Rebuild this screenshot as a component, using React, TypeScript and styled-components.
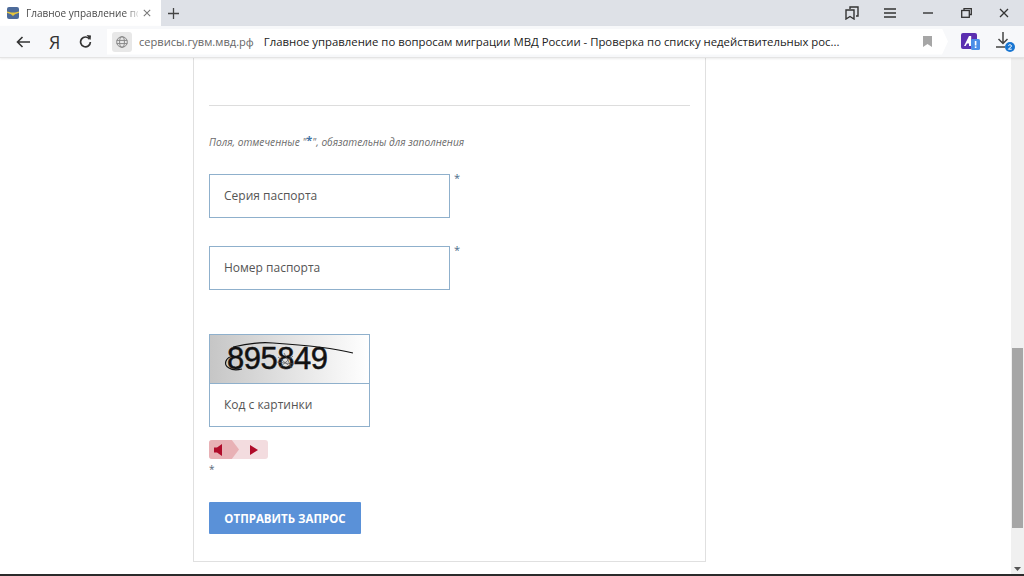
import React from "react";
import styled, { createGlobalStyle } from "styled-components";

const GlobalStyle = createGlobalStyle`
  html, body {
    margin: 0;
    padding: 0;
    height: 100%;
    overflow: hidden;
    background: #ffffff;
  }
  * {
    box-sizing: border-box;
  }
`;

const Screen = styled.div`
  display: flex;
  flex-direction: column;
  width: 1024px;
  height: 576px;
  overflow: hidden;
  font-family: "Open Sans", "Noto Sans", sans-serif;
`;

const TabBar = styled.div`
  display: flex;
  align-items: stretch;
  height: 26px;
  background: #dee1e7;
`;

const Tab = styled.div`
  display: flex;
  align-items: center;
  width: 161px;
  padding-left: 7px;
  background: #ffffff;
  font-size: 10px;
  color: #4a4a4a;
`;

const TabTitle = styled.span`
  width: 112px;
  margin-left: 7px;
  white-space: nowrap;
  -webkit-mask-image: linear-gradient(to right, #000 88%, rgba(0, 0, 0, 0.2));
  mask-image: linear-gradient(to right, #000 88%, rgba(0, 0, 0, 0.2));
`;

const TabClose = styled.span`
  display: flex;
  margin-left: 5px;
  color: #777;
`;

const NewTab = styled.div`
  display: flex;
  align-items: center;
  margin-left: 7px;
  color: #444;
`;

const WindowControls = styled.div`
  display: flex;
  align-items: center;
  margin-left: auto;
  padding-right: 1px;
  color: #333;
`;

const WindowButton = styled.span`
  display: flex;
  align-items: center;
  justify-content: center;
  width: 38px;
`;

const Toolbar = styled.div`
  display: flex;
  align-items: center;
  height: 32px;
  background: #f7f8fa;
  border-bottom: 1px solid #e4e4e4;
  box-shadow: 0 1px 2px rgba(0, 0, 0, 0.08);
  position: relative;
  z-index: 1;
`;

const NavIcons = styled.div`
  display: flex;
  align-items: center;
  width: 107px;
  padding-left: 16px;
  gap: 19px;
  color: #333;
`;

const YaMark = styled.span`
  font-size: 18px;
  line-height: 1;
  color: #333;
`;

const AddressBar = styled.div`
  display: flex;
  align-items: center;
  width: 841px;
  height: 26px;
  padding: 0 16px 0 5px;
  background: #ffffff;
  clip-path: polygon(0 0, calc(100% - 6px) 0, 100% 50%, calc(100% - 6px) 100%, 0 100%);
  white-space: nowrap;
`;

const GlobeBox = styled.span`
  display: flex;
  align-items: center;
  justify-content: center;
  width: 20px;
  height: 20px;
  border-radius: 3px;
  background: #e8e8e8;
  color: #888;
`;

const Domain = styled.span`
  margin-left: 7px;
  font-size: 11.1px;
  color: #666;
`;

const PageTitle = styled.span`
  margin-left: 10px;
  font-size: 11.35px;
  color: #222;
`;

const Bookmark = styled.span`
  display: flex;
  margin-left: auto;
  color: #a6a6a6;
`;

const ToolbarExtras = styled.div`
  display: flex;
  align-items: center;
  gap: 15px;
  margin-left: 13px;
`;

const Viewport = styled.div`
  display: flex;
  flex: 1;
  min-height: 0;
`;

const PageArea = styled.main`
  flex: 1;
  padding-left: 193px;
  background: #ffffff;
`;

const Card = styled.section`
  display: flex;
  flex-direction: column;
  width: 513px;
  height: 504px;
  padding: 0 15px;
  border: 1px solid #e0e0e0;
  border-top: none;
`;

const Divider = styled.hr`
  width: 100%;
  margin: 47px 0 0;
  border: none;
  border-top: 1px solid #dddddd;
`;

const Hint = styled.p`
  margin: 26px 0 0;
  height: 15px;
  font-size: 10.2px;
  line-height: 15px;
  font-style: italic;
  color: #6b6b6b;
`;

const HintStar = styled.span`
  font-style: normal;
  font-weight: 700;
  color: #3f73a6;
  font-size: 11px;
  vertical-align: 2px;
`;

const FieldRow = styled.div<{ $top: number }>`
  display: flex;
  align-items: flex-start;
  margin-top: ${(props) => props.$top}px;
`;

const TextField = styled.div`
  display: flex;
  align-items: center;
  width: 241px;
  height: 44px;
  padding: 0 0 2px 14px;
  border: 1px solid #8fb0cc;
  font-size: 12px;
  color: #555;
`;

const Required = styled.span`
  margin-left: 4px;
  font-size: 11px;
  line-height: 8px;
  color: #4a6a8a;
`;

const CaptchaBox = styled.div`
  display: flex;
  flex-direction: column;
  width: 161px;
  height: 93px;
  margin-top: 44px;
  border: 1px solid #8fb0cc;
`;

const CaptchaImage = styled.div`
  position: relative;
  height: 49px;
  border-bottom: 1px solid #8fb0cc;
  background: linear-gradient(to right, #c6c6c6, #ffffff);
  overflow: hidden;
`;

const CaptchaDigits = styled.span`
  position: absolute;
  left: 17px;
  top: 5px;
  font-family: "Liberation Sans", sans-serif;
  font-size: 31px;
  letter-spacing: -0.5px;
  line-height: 38px;
  color: #111;
  -webkit-text-stroke: 0.5px #111;
`;

const CaptchaScratch = styled.svg`
  position: absolute;
  inset: 0;
`;

const CaptchaInput = styled.div`
  display: flex;
  flex: 1;
  align-items: center;
  padding: 0 0 2px 14px;
  font-size: 12px;
  color: #555;
`;

const AudioSwitch = styled.div`
  display: flex;
  width: 59px;
  height: 19px;
  margin-top: 13px;
  border-radius: 3px;
  background: #f3dcdf;
  overflow: hidden;
`;

const AudioButton = styled.span<{ $active?: boolean }>`
  display: flex;
  align-items: center;
  justify-content: center;
  width: ${(props) => (props.$active ? 30 : 29)}px;
  background: ${(props) => (props.$active ? "#e8b1b5" : "transparent")};
  clip-path: ${(props) =>
    props.$active ? "polygon(0 0, 76% 0, 100% 50%, 76% 100%, 0 100%)" : "none"};
  color: #b00c2a;
  padding-right: ${(props) => (props.$active ? 12 : 0)}px;
`;

const LooseStar = styled.span`
  margin-top: 3px;
  height: 14px;
  font-size: 10px;
  line-height: 14px;
  color: #556677;
`;

const SubmitButton = styled.button`
  width: 152px;
  height: 32px;
  margin-top: 26px;
  border: none;
  border-radius: 1px;
  background: #5a91d8;
  color: #ffffff;
  font-family: "Open Sans", sans-serif;
  font-size: 11.5px;
  font-weight: 700;
`;

const Scrollbar = styled.div`
  position: relative;
  width: 13px;
  background: #f0f0f0;
`;

const ScrollThumb = styled.div`
  position: absolute;
  left: 1px;
  top: 290px;
  width: 11px;
  height: 180px;
  background: #a6a6a6;
`;

const ScrollArrow = styled.svg`
  position: absolute;
  left: 3px;
  bottom: 3px;
`;

const Taskbar = styled.div`
  height: 2px;
  background: #2b2b2b;
`;

const Emblem = () => (
  <svg width="12" height="12" viewBox="0 0 12 12">
    <rect width="12" height="12" rx="2" fill="#4d6b9a" />
    <path d="M0 4.6l4 .8h4l4-.8v1.2L8 7.2 6 9 4 7.2 0 5.8z" fill="#e6c53c" />
  </svg>
);

const Cross = ({ size = 10 }: { size?: number }) => (
  <svg width={size} height={size} viewBox="0 0 10 10" stroke="currentColor" strokeWidth="1.3" fill="none">
    <path d="M1 1l8 8M9 1l-8 8" />
  </svg>
);

const Plus = () => (
  <svg width="11" height="11" viewBox="0 0 12 12" stroke="currentColor" strokeWidth="1.4" fill="none">
    <path d="M6 0v12M0 6h12" />
  </svg>
);

const Collections = () => (
  <svg width="14" height="14" viewBox="0 0 14 14" stroke="currentColor" strokeWidth="1.4" fill="none">
    <path d="M5 3V1h8v9h-2" />
    <path d="M1 4h8v9L5 10.5 1 13z" />
  </svg>
);

const Menu = () => (
  <svg width="12" height="10" viewBox="0 0 12 10" stroke="currentColor" strokeWidth="1.3" fill="none">
    <path d="M0 1h12M0 5h12M0 9h12" />
  </svg>
);

const Minimize = () => (
  <svg width="10" height="2" viewBox="0 0 10 2" stroke="currentColor" strokeWidth="1.4">
    <path d="M0 1h10" />
  </svg>
);

const Restore = () => (
  <svg width="11" height="10" viewBox="0 0 11 10" stroke="currentColor" strokeWidth="1.3" fill="none">
    <path d="M3 2V.7h7.3V6.5H8.5" />
    <rect x=".7" y="2.5" width="7.6" height="6.8" />
  </svg>
);

const BackArrow = () => (
  <svg width="14" height="12" viewBox="0 0 14 12" stroke="currentColor" strokeWidth="1.6" fill="none">
    <path d="M14 6H1.5M6.5 1L1.5 6l5 5" />
  </svg>
);

const Reload = () => (
  <svg width="13" height="13" viewBox="0 0 13 13" fill="none">
    <path d="M10.6 4.2A4.9 4.9 0 1 0 11.4 7" stroke="currentColor" strokeWidth="1.7" />
    <path d="M7.5 0l4.5 .4-.4 4.6z" fill="currentColor" />
  </svg>
);

const Globe = () => (
  <svg width="12" height="12" viewBox="0 0 12 12" stroke="currentColor" strokeWidth="1" fill="none">
    <circle cx="6" cy="6" r="5.3" />
    <ellipse cx="6" cy="6" rx="2.4" ry="5.3" />
    <path d="M.7 4.4h10.6M.7 7.6h10.6" />
  </svg>
);

const BookmarkIcon = () => (
  <svg width="9" height="11" viewBox="0 0 9 11" fill="currentColor">
    <path d="M0 0h9v11L4.5 8 0 11z" />
  </svg>
);

const ExtensionBadge = () => (
  <svg width="20" height="18" viewBox="0 0 20 18">
    <rect x="0" y="0" width="16" height="16" rx="2" fill="#5b2fb0" />
    <path d="M3 13L8 3h2.2v10H8v-2.5H6L4.6 13z" fill="#ffffff" />
    <rect x="10" y="6" width="9" height="11" rx="1.5" fill="#4b8fe8" />
    <rect x="13.8" y="8" width="1.6" height="4.5" fill="#ffffff" />
    <rect x="13.8" y="13.4" width="1.6" height="1.6" fill="#ffffff" />
  </svg>
);

const DownloadBadge = () => (
  <svg width="20" height="20" viewBox="0 0 20 20" fill="none">
    <path d="M7 0v11M2.5 7L7 11.5 11.5 7M0 15h9" stroke="#444" strokeWidth="1.5" />
    <circle cx="14" cy="15" r="5" fill="#1976d2" />
    <path d="M12.3 13.6c.6-1.3 3.2-1 3.2.4 0 1.2-2.4 2-3.2 3.2h3.4" stroke="#fff" strokeWidth="1" />
  </svg>
);

const SpeakerLeft = () => (
  <svg width="8" height="12" viewBox="0 0 8 12" fill="currentColor">
    <path d="M8 0v12L3 8.5H0v-5h3z" />
  </svg>
);

const PlayRight = () => (
  <svg width="8" height="10" viewBox="0 0 8 10" fill="currentColor">
    <path d="M0 0l8 5-8 5z" />
  </svg>
);

export default function App() {
  return (
    <Screen>
      <GlobalStyle />
      <TabBar>
        <Tab>
          <Emblem />
          <TabTitle>Главное управление по</TabTitle>
          <TabClose>
            <Cross size={8} />
          </TabClose>
        </Tab>
        <NewTab>
          <Plus />
        </NewTab>
        <WindowControls>
          <WindowButton>
            <Collections />
          </WindowButton>
          <WindowButton>
            <Menu />
          </WindowButton>
          <WindowButton>
            <Minimize />
          </WindowButton>
          <WindowButton>
            <Restore />
          </WindowButton>
          <WindowButton>
            <Cross />
          </WindowButton>
        </WindowControls>
      </TabBar>
      <Toolbar>
        <NavIcons>
          <BackArrow />
          <YaMark>Я</YaMark>
          <Reload />
        </NavIcons>
        <AddressBar>
          <GlobeBox>
            <Globe />
          </GlobeBox>
          <Domain>сервисы.гувм.мвд.рф</Domain>
          <PageTitle>
            Главное управление по вопросам миграции МВД России - Проверка по списку недействительных рос...
          </PageTitle>
          <Bookmark>
            <BookmarkIcon />
          </Bookmark>
        </AddressBar>
        <ToolbarExtras>
          <ExtensionBadge />
          <DownloadBadge />
        </ToolbarExtras>
      </Toolbar>
      <Viewport>
        <PageArea>
          <Card>
            <Divider />
            <Hint>
              Поля, отмеченные "<HintStar>*</HintStar>", обязательны для заполнения
            </Hint>
            <FieldRow $top={27}>
              <TextField>Серия паспорта</TextField>
              <Required>*</Required>
            </FieldRow>
            <FieldRow $top={28}>
              <TextField>Номер паспорта</TextField>
              <Required>*</Required>
            </FieldRow>
            <CaptchaBox>
              <CaptchaImage>
                <CaptchaDigits>895849</CaptchaDigits>
                <CaptchaScratch width="159" height="48" viewBox="0 0 159 48" fill="none" stroke="#111">
                  <path d="M23 12C35 9 50 7 63 8c30 2 60 5 80 10" strokeWidth="1.2" />
                  <path d="M24 21c-9 1-11 9-5 12 3 2 9 2 13 1" strokeWidth="1.2" />
                  <path d="M68 22l14 11M74 18l8 15M70 32l13-11M66 27l18 2" strokeWidth="0.7" stroke="#555" />
                </CaptchaScratch>
              </CaptchaImage>
              <CaptchaInput>Код с картинки</CaptchaInput>
            </CaptchaBox>
            <AudioSwitch>
              <AudioButton $active>
                <SpeakerLeft />
              </AudioButton>
              <AudioButton>
                <PlayRight />
              </AudioButton>
            </AudioSwitch>
            <LooseStar>*</LooseStar>
            <SubmitButton>ОТПРАВИТЬ ЗАПРОС</SubmitButton>
          </Card>
        </PageArea>
        <Scrollbar>
          <ScrollThumb />
          <ScrollArrow width="7" height="4" viewBox="0 0 7 4" fill="#555">
            <path d="M0 0h7L3.5 4z" />
          </ScrollArrow>
        </Scrollbar>
      </Viewport>
      <Taskbar />
    </Screen>
  );
}
